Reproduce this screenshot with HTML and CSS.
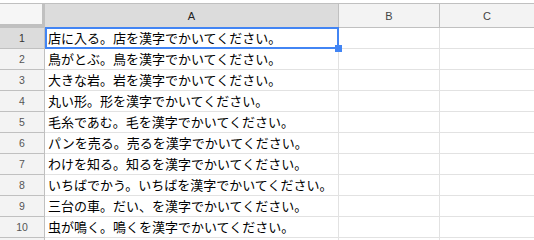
FILE: index.html
```html
<!DOCTYPE html>
<html lang="ja">
<head>
<meta charset="utf-8">
<link rel="stylesheet" href="styles.css">
</head>
<body>
<div class="sheet">
  <div class="topstrip"></div>
  <div class="row head">
    <div class="rh corner"></div>
    <div class="ch ca sel">A</div>
    <div class="ch cb">B</div>
    <div class="ch cc">C</div>
  </div>
  <div class="row">
    <div class="rh sel">1</div>
    <div class="cell ca active">店に入る。店を漢字でかいてください。<span class="selbox"><span class="handle"></span></span></div>
    <div class="cell cb"></div><div class="cell cc"></div>
  </div>
  <div class="row"><div class="rh">2</div><div class="cell ca">鳥がとぶ。鳥を漢字でかいてください。</div><div class="cell cb"></div><div class="cell cc"></div></div>
  <div class="row"><div class="rh">3</div><div class="cell ca">大きな岩。岩を漢字でかいてください。</div><div class="cell cb"></div><div class="cell cc"></div></div>
  <div class="row"><div class="rh">4</div><div class="cell ca">丸い形。形を漢字でかいてください。</div><div class="cell cb"></div><div class="cell cc"></div></div>
  <div class="row"><div class="rh">5</div><div class="cell ca">毛糸であむ。毛を漢字でかいてください。</div><div class="cell cb"></div><div class="cell cc"></div></div>
  <div class="row"><div class="rh">6</div><div class="cell ca">パンを売る。売るを漢字でかいてください。</div><div class="cell cb"></div><div class="cell cc"></div></div>
  <div class="row"><div class="rh">7</div><div class="cell ca">わけを知る。知るを漢字でかいてください。</div><div class="cell cb"></div><div class="cell cc"></div></div>
  <div class="row"><div class="rh">8</div><div class="cell ca">いちばでかう。いちばを漢字でかいてください。</div><div class="cell cb"></div><div class="cell cc"></div></div>
  <div class="row"><div class="rh">9</div><div class="cell ca">三台の車。だい、を漢字でかいてください。</div><div class="cell cb"></div><div class="cell cc"></div></div>
  <div class="row"><div class="rh">10</div><div class="cell ca">虫が鳴く。鳴くを漢字でかいてください。</div><div class="cell cb"></div><div class="cell cc"></div></div>
  <div class="row"><div class="rh"></div><div class="cell ca"></div><div class="cell cb"></div><div class="cell cc"></div></div>
</div>
</body>
</html>
```
FILE: styles.css
```css
* { box-sizing: border-box; }
html, body { margin: 0; padding: 0; background: #fff; }
body { width: 534px; height: 240px; overflow: hidden; }
.sheet { width: 534px; }
.topstrip { height: 3px; background: #fff; }
.row { display: flex; height: 21px; }
.row.head { height: 25px; border-top: 1px solid #c0c0c0; }
.rh {
  flex: 0 0 45px;
  border-right: 1px solid #c0c0c0;
  border-bottom: 1px solid #c0c0c0;
  background: #f3f3f3;
  color: #555;
  font: 10.5px "Liberation Sans", Arial, sans-serif;
  display: flex; align-items: center; justify-content: center;
}
.rh.sel { background: #dcdcdc; color: #333; }
.rh.corner { border-right: 3px solid #c0c0c0; border-bottom: 4px solid #c0c0c0; background: #f6f6f6; }
.ch {
  border-right: 1px solid #c0c0c0;
  border-bottom: 1px solid #c0c0c0;
  background: #f3f3f3;
  color: #444;
  font: 11px "Liberation Sans", Arial, sans-serif;
  display: flex; align-items: center; justify-content: center;
}
.ch.sel { background: #dcdcdc; color: #222; }
.ca { flex: 0 0 294px; }
.cb { flex: 0 0 101px; }
.cc { flex: 1 1 auto; border-right: none; }
.cell {
  border-right: 1px solid #e2e2e2;
  border-bottom: 1px solid #e2e2e2;
  font: 13px "Noto Sans CJK JP", sans-serif;
  color: #000;
  padding-left: 3px;
  line-height: 20px;
  white-space: nowrap;
  overflow: visible;
}
.cell.cc { border-right: none; }
.active { position: relative; }
.selbox {
  position: absolute;
  left: 0; top: -1px; right: -1px; bottom: -1px;
  border: 2px solid #4285f4;
}
.handle {
  position: absolute;
  right: -5px; bottom: -5px;
  width: 7px; height: 7px;
  background: #4285f4;
}
```
